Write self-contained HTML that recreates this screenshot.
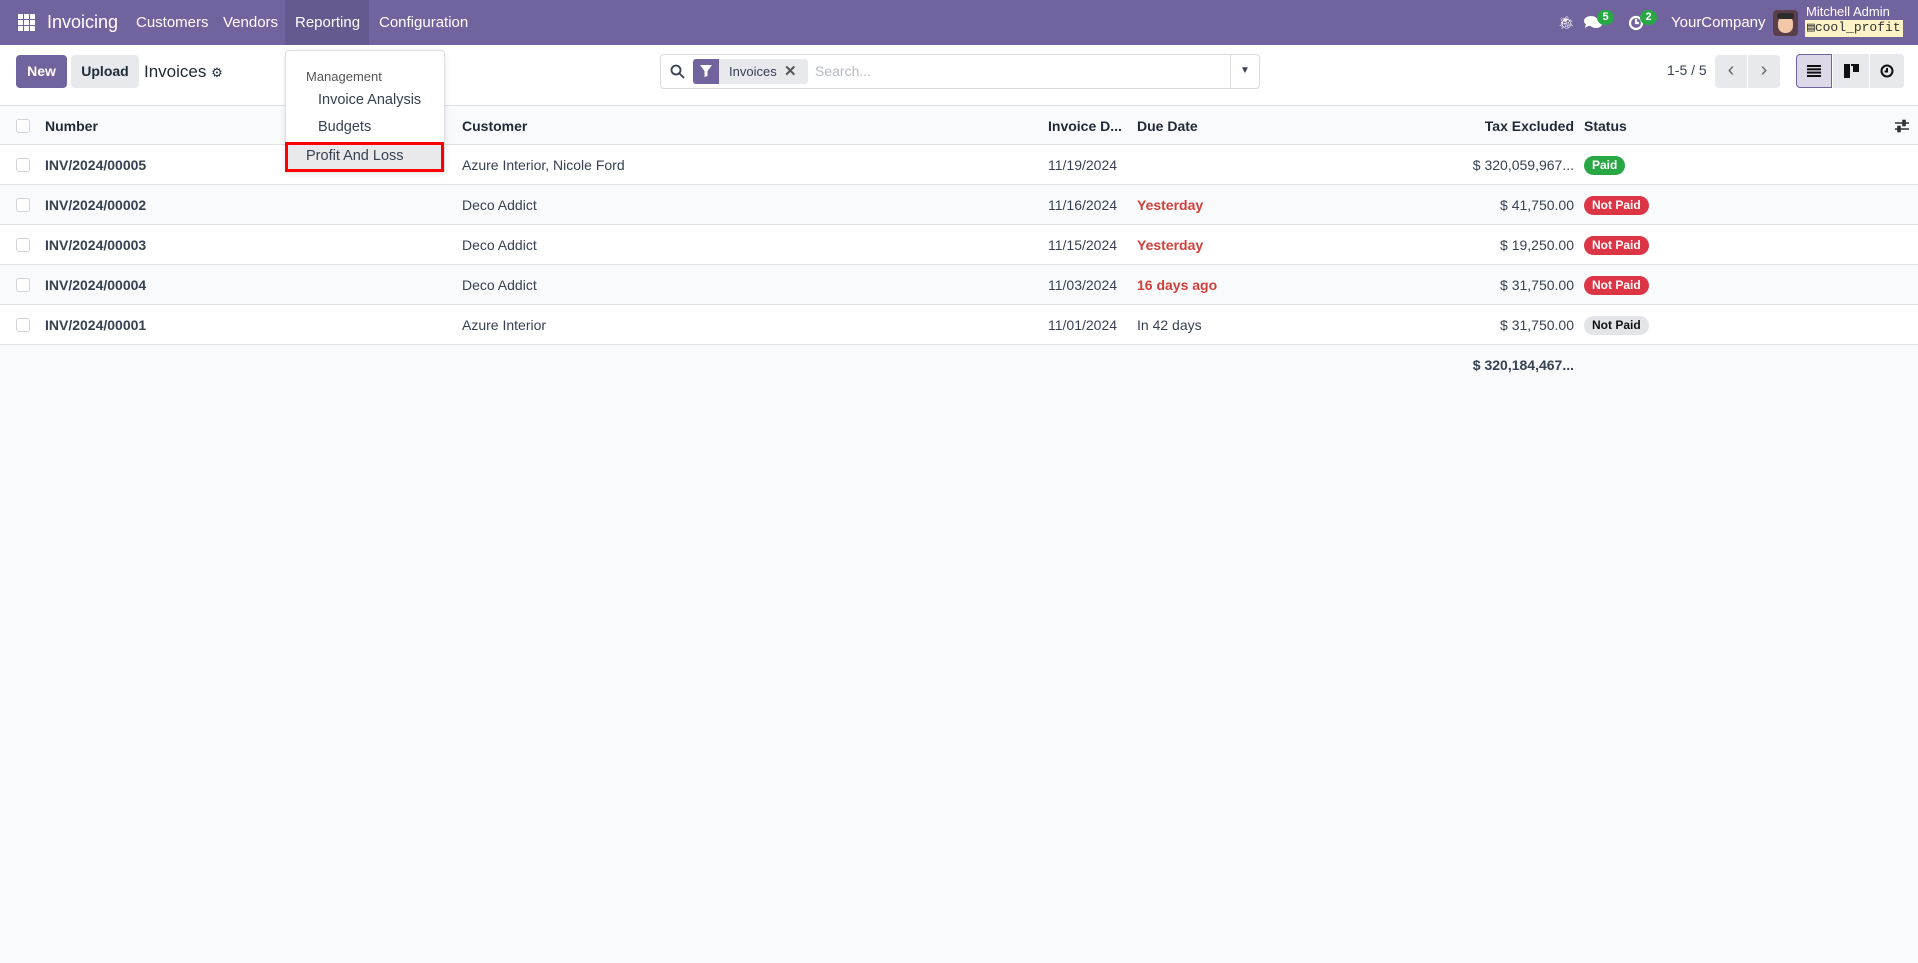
<!DOCTYPE html>
<html><head><meta charset="utf-8"><style>
*{box-sizing:border-box;margin:0;padding:0}
body{width:1918px;height:963px;background:#f9fafb;font-family:"Liberation Sans",sans-serif;color:#374151;font-size:14px;position:relative;overflow:hidden}
.a{position:absolute;white-space:nowrap}
.nav{position:absolute;left:0;top:0;width:1918px;height:45px;background:#71639e;color:#fff}
.nav .a{top:0;line-height:45px;font-size:15px}
.ctl{position:absolute;left:0;top:45px;width:1918px;height:60px;background:#fff}
.btn{position:absolute;top:55px;height:33px;border-radius:4px;font-weight:bold;font-size:14px;line-height:33px;text-align:center}
.row{position:absolute;left:0;width:1918px;height:40px;border-bottom:1px solid #dee2e6;background:#fff}
.row.alt{background:#f9fafb}
.row .a{top:0;line-height:40px}
.cb{position:absolute;left:16px;top:13px;width:14px;height:14px;border:1px solid #d1d5db;border-radius:3px;background:#fff}
.badge{position:absolute;top:11px;height:19px;line-height:19px;border-radius:10px;font-size:12px;font-weight:bold;padding:0 8px;color:#fff}
.red{color:#d23f3a;font-weight:bold}
</style></head><body>
<div class="nav">
 <svg class="a" style="left:18px;top:14px" width="17" height="17" viewBox="0 0 17 17" fill="#fff"><rect x="0" y="0" width="5" height="5"/><rect x="6" y="0" width="5" height="5"/><rect x="12" y="0" width="5" height="5"/><rect x="0" y="6" width="5" height="5"/><rect x="6" y="6" width="5" height="5"/><rect x="12" y="6" width="5" height="5"/><rect x="0" y="12" width="5" height="5"/><rect x="6" y="12" width="5" height="5"/><rect x="12" y="12" width="5" height="5"/></svg>
 <div class="a" style="left:47px;font-size:18px">Invoicing</div>
 <div class="a" style="left:136px">Customers</div>
 <div class="a" style="left:223px">Vendors</div>
 <div class="a" style="left:285px;width:84px;height:45px;background:#655a8f"></div>
 <div class="a" style="left:295px">Reporting</div>
 <div class="a" style="left:379px">Configuration</div>
 <div class="a" style="left:1558px;font-size:13px">&#x1F41E;&#xFE0E;</div>
 <svg class="a" style="left:1584px;top:15px" width="18" height="15" viewBox="0 0 18 15" fill="#fff"><ellipse cx="7" cy="6" rx="7" ry="5"/><path d="M2 9 L1 13 L6 10Z"/><ellipse cx="12" cy="9" rx="6" ry="4"/></svg>
 <div class="a" style="left:1597px;top:10px;line-height:15px;height:15px;width:17px;border-radius:8px;background:#28a745;font-size:11px;text-align:center;font-weight:bold">5</div>
 <svg class="a" style="left:1628px;top:15px" width="16" height="16" viewBox="0 0 16 16" fill="none" stroke="#fff" stroke-width="2.2"><circle cx="8" cy="8" r="6"/><path d="M8 4v4h3"/></svg>
 <div class="a" style="left:1640px;top:10px;line-height:15px;height:15px;width:17px;border-radius:8px;background:#28a745;font-size:11px;text-align:center;font-weight:bold">2</div>
 <div class="a" style="left:1671px">YourCompany</div>
 <div class="a" style="left:1773px;top:10px;width:25px;height:26px;border-radius:4px;background:#5a3f4a"><div style="position:absolute;left:5px;top:6px;width:15px;height:17px;border-radius:7px;background:#f1c7a8"></div><div style="position:absolute;left:4px;top:3px;width:17px;height:6px;border-radius:3px;background:#2c2c2c"></div></div>
 <div class="a" style="left:1806px;top:5px;line-height:14px;font-size:13px">Mitchell Admin</div>
 <div class="a" style="left:1805px;top:20px;line-height:16px;height:17px;font-size:13px;background:#fdf3c6;color:#333;font-family:'Liberation Mono',monospace;padding:0 2px">&#9636;cool_profit</div>
</div>
<div class="ctl"></div>
<div class="btn" style="left:16px;width:51px;background:#71639e;color:#fff">New</div>
<div class="btn" style="left:71px;width:68px;background:#e7e9ed;color:#1f2937">Upload</div>
<div class="a" style="left:144px;top:62px;font-size:17px;color:#1f2937">Invoices <span style="font-size:13px">&#9881;</span></div>
<div class="a" style="left:660px;top:54px;width:600px;height:35px;border:1px solid #d8dadd;border-radius:4px;background:#fff"></div>
<svg class="a" style="left:670px;top:64px" width="15" height="15" viewBox="0 0 15 15" fill="none" stroke="#374151" stroke-width="1.8"><circle cx="6" cy="6" r="4.5"/><path d="M9.5 9.5L14 14"/></svg>
<div class="a" style="left:693px;top:59px;width:115px;height:25px;border-radius:3px;background:#e7e9ed"></div>
<div class="a" style="left:693px;top:59px;width:26px;height:25px;border-radius:3px 0 0 3px;background:#71639e"></div>
<svg class="a" style="left:700px;top:65px" width="12" height="12" viewBox="0 0 12 12" fill="#fff"><path d="M0 0H12L7.5 6V11L4.5 12V6Z"/></svg>
<div class="a" style="left:729px;top:59px;line-height:25px;font-size:13px">Invoices</div>
<div class="a" style="left:784px;top:59px;line-height:25px;font-size:15px;font-weight:bold;color:#555">&#x2715;</div>
<div class="a" style="left:815px;top:59px;line-height:25px;font-size:14px;color:#b5b9c0">Search...</div>
<div class="a" style="left:1230px;top:55px;width:1px;height:33px;background:#d8dadd"></div>
<div class="a" style="left:1240px;top:60px;line-height:22px;font-size:10px">&#9660;</div>
<div class="a" style="left:1667px;top:62px;font-size:14px">1-5 / 5</div>
<div class="a" style="left:1715px;top:55px;width:32px;height:33px;border-radius:4px 0 0 4px;background:#e7e9ed;line-height:31px;text-align:center;font-size:20px;color:#666">&#8249;</div>
<div class="a" style="left:1748px;top:55px;width:32px;height:33px;border-radius:0 4px 4px 0;background:#e7e9ed;line-height:31px;text-align:center;font-size:20px;color:#666">&#8250;</div>
<div class="a" style="left:1796px;top:54px;width:36px;height:34px;border:1px solid #71639e;border-radius:4px 0 0 4px;background:#dcd8e8"></div>
<svg class="a" style="left:1807px;top:65px" width="14" height="12" viewBox="0 0 14 12" fill="#111"><rect y="0" width="14" height="2"/><rect y="3.3" width="14" height="2"/><rect y="6.6" width="14" height="2"/><rect y="10" width="14" height="2"/></svg>
<div class="a" style="left:1833px;top:54px;width:36px;height:34px;background:#e7e9ed"></div>
<svg class="a" style="left:1844px;top:64px" width="15" height="14" viewBox="0 0 15 14" fill="#111"><rect x="0" y="0" width="6" height="14"/><rect x="7" y="0" width="8" height="2"/><rect x="9" y="2" width="6" height="6"/></svg>
<div class="a" style="left:1870px;top:54px;width:34px;height:34px;border-radius:0 4px 4px 0;background:#e7e9ed"></div>
<svg class="a" style="left:1880px;top:64px" width="14" height="14" viewBox="0 0 14 14" fill="none" stroke="#111" stroke-width="2"><circle cx="7" cy="7" r="5.5"/><path d="M7 4v3.5h-2.5"/></svg>

<div class="row alt" style="top:105px;height:40px;border-top:1px solid #dee2e6">
 <div class="cb"></div>
 <div class="a" style="left:45px;font-weight:bold;color:#1f2937">Number</div>
 <div class="a" style="left:462px;font-weight:bold;color:#1f2937">Customer</div>
 <div class="a" style="left:1048px;font-weight:bold;color:#1f2937">Invoice D...</div>
 <div class="a" style="left:1137px;font-weight:bold;color:#1f2937">Due Date</div>
 <div class="a" style="left:1400px;width:174px;text-align:right;font-weight:bold;color:#1f2937">Tax Excluded</div>
 <div class="a" style="left:1584px;font-weight:bold;color:#1f2937">Status</div>
 <svg class="a" style="left:1895px;top:13px" width="14" height="14" viewBox="0 0 14 14" stroke="#333" stroke-width="1.6"><path d="M0 4h14M0 10h14"/><rect x="8" y="1.5" width="2" height="5" fill="#333"/><rect x="3" y="7.5" width="2" height="5" fill="#333"/></svg>
</div>
<div class="row" style="top:145px"><div class="cb"></div><div class="a" style="left:45px;font-weight:bold">INV/2024/00005</div><div class="a" style="left:462px">Azure Interior, Nicole Ford</div><div class="a" style="left:1048px">11/19/2024</div><div class="a" style="left:1400px;width:174px;text-align:right">$ 320,059,967...</div><div class="badge" style="left:1584px;background:#28a745">Paid</div></div>
<div class="row alt" style="top:185px"><div class="cb"></div><div class="a" style="left:45px;font-weight:bold">INV/2024/00002</div><div class="a" style="left:462px">Deco Addict</div><div class="a" style="left:1048px">11/16/2024</div><div class="a red" style="left:1137px">Yesterday</div><div class="a" style="left:1400px;width:174px;text-align:right">$ 41,750.00</div><div class="badge" style="left:1584px;background:#dc3545">Not Paid</div></div>
<div class="row" style="top:225px"><div class="cb"></div><div class="a" style="left:45px;font-weight:bold">INV/2024/00003</div><div class="a" style="left:462px">Deco Addict</div><div class="a" style="left:1048px">11/15/2024</div><div class="a red" style="left:1137px">Yesterday</div><div class="a" style="left:1400px;width:174px;text-align:right">$ 19,250.00</div><div class="badge" style="left:1584px;background:#dc3545">Not Paid</div></div>
<div class="row alt" style="top:265px"><div class="cb"></div><div class="a" style="left:45px;font-weight:bold">INV/2024/00004</div><div class="a" style="left:462px">Deco Addict</div><div class="a" style="left:1048px">11/03/2024</div><div class="a red" style="left:1137px">16 days ago</div><div class="a" style="left:1400px;width:174px;text-align:right">$ 31,750.00</div><div class="badge" style="left:1584px;background:#dc3545">Not Paid</div></div>
<div class="row" style="top:305px"><div class="cb"></div><div class="a" style="left:45px;font-weight:bold">INV/2024/00001</div><div class="a" style="left:462px">Azure Interior</div><div class="a" style="left:1048px">11/01/2024</div><div class="a" style="left:1137px">In 42 days</div><div class="a" style="left:1400px;width:174px;text-align:right">$ 31,750.00</div><div class="badge" style="left:1584px;background:#e2e4e8;color:#111">Not Paid</div></div>
<div class="a" style="left:1400px;top:355px;width:174px;text-align:right;font-weight:bold;line-height:20px">$ 320,184,467...</div>

<div class="a" style="left:285px;top:50px;width:160px;height:122px;background:#fff;border:1px solid #dcdfe3;border-radius:4px;box-shadow:0 2px 6px rgba(0,0,0,.1)"></div>
<div class="a" style="left:306px;top:69px;font-size:13px;color:#555">Management</div>
<div class="a" style="left:318px;top:92px;font-size:14.5px">Invoice Analysis</div>
<div class="a" style="left:318px;top:119px;font-size:14.5px">Budgets</div>
<div class="a" style="left:285px;top:142px;width:159px;height:30px;background:#e9e9eb;border:3px solid #f00"></div>
<div class="a" style="left:306px;top:142px;line-height:28px;font-size:14.5px">Profit And Loss</div>
</body></html>
